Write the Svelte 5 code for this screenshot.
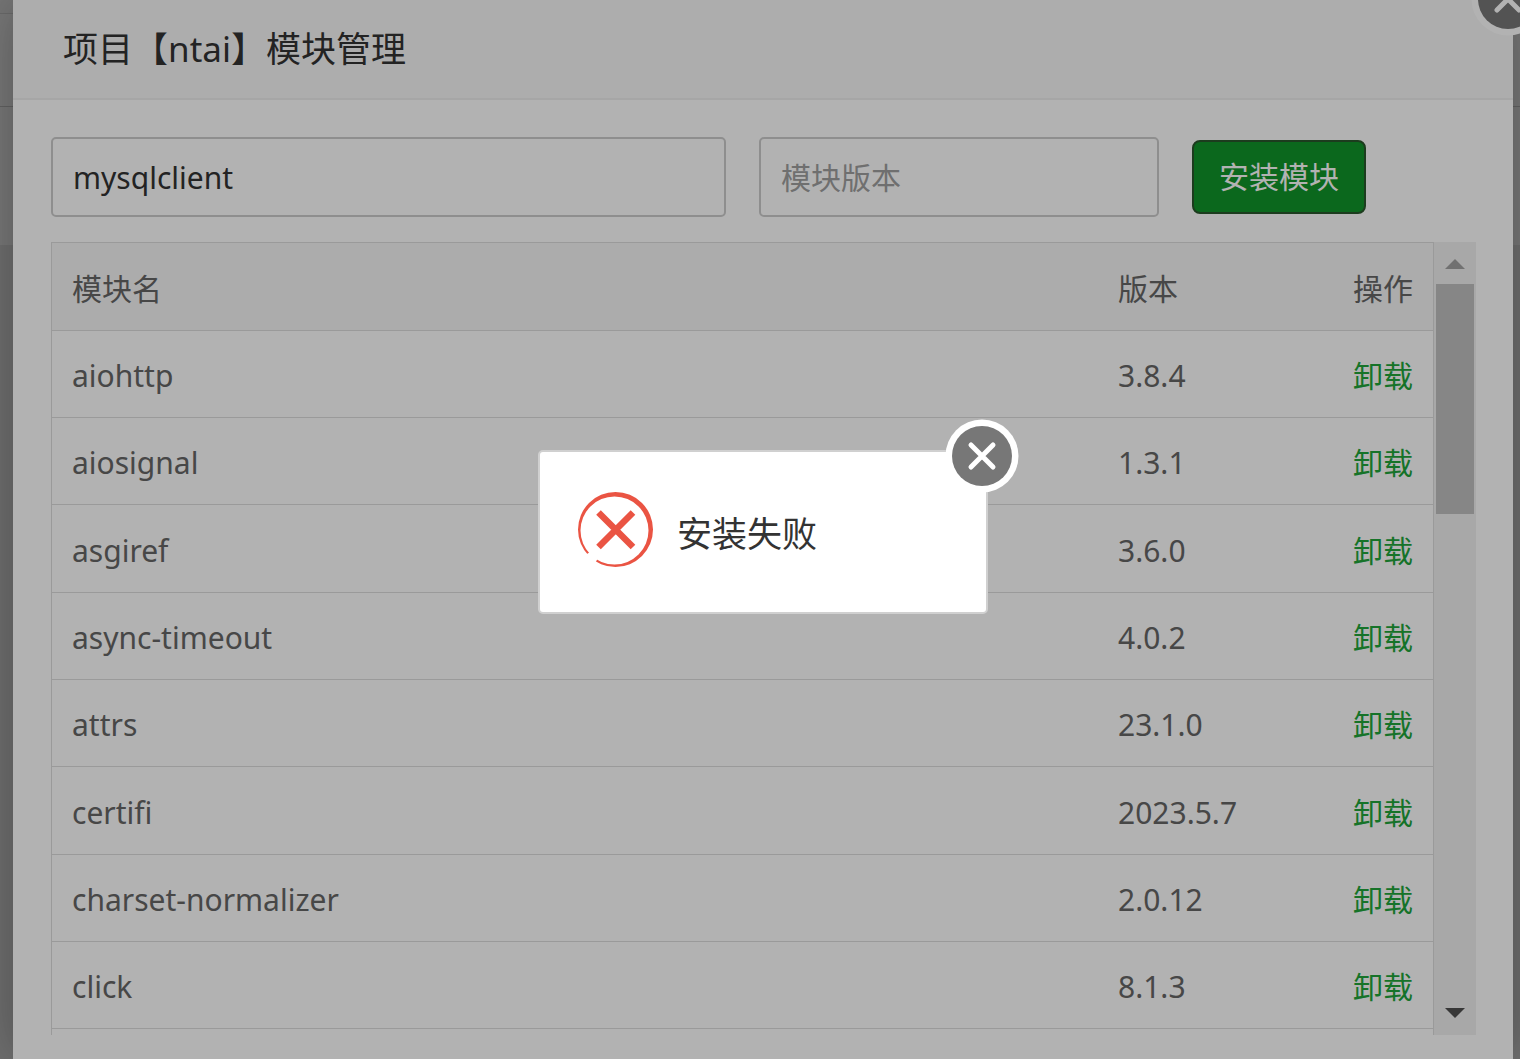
<script>
  let moduleName = 'mysqlclient';
  let moduleVersion = '';
  let visible = true;
  let alertVisible = true;

  const modules = [
    { name: 'aiohttp', version: '3.8.4' },
    { name: 'aiosignal', version: '1.3.1' },
    { name: 'asgiref', version: '3.6.0' },
    { name: 'async-timeout', version: '4.0.2' },
    { name: 'attrs', version: '23.1.0' },
    { name: 'certifi', version: '2023.5.7' },
    { name: 'charset-normalizer', version: '2.0.12' },
    { name: 'click', version: '8.1.3' }
  ];

  function handleInstall() {
    alertVisible = true;
  }
</script>

<div class="page">
  <div class="backdrop">
    <div class="strip"></div>
    <div class="bar"></div>
    <div class="panel"></div>
  </div>

  {#if visible}
    <section class="dialog">
      <header class="dialog-header">
        <h2>项目【ntai】模块管理</h2>
      </header>
      <button class="close-btn dialog-close" aria-label="关闭" on:click={() => (visible = false)}>
        <svg width="74" height="74" viewBox="0 0 74 74">
          <circle cx="37" cy="37" r="36.500" fill="#fff" />
          <circle cx="37" cy="37" r="30" fill="#777" />
          <path d="M26 26L48 48M48 26L26 48" stroke="#fff" stroke-width="5" stroke-linecap="round" />
        </svg>
      </button>

      <div class="dialog-body">
        <form class="install-form" on:submit|preventDefault={handleInstall}>
          <input class="name-input" type="text" aria-label="模块名" bind:value={moduleName} />
          <input class="version-input" type="text" placeholder="模块版本" bind:value={moduleVersion} />
          <button class="install-btn" type="submit">安装模块</button>
        </form>

        <div class="list">
          <div class="table-box">
            <table>
              <thead>
                <tr>
                  <th>模块名</th>
                  <th class="col-version">版本</th>
                  <th class="col-action">操作</th>
                </tr>
              </thead>
              <tbody>
                {#each modules as item}
                  <tr>
                    <td>{item.name}</td>
                    <td>{item.version}</td>
                    <td class="col-action"><a href="#uninstall">卸载</a></td>
                  </tr>
                {/each}
              </tbody>
            </table>
          </div>
          <div class="scrollbar" aria-hidden="true">
            <svg class="arrow up" width="20" height="10" viewBox="0 0 20 10"><path d="M0 10L10 0L20 10z" /></svg>
            <div class="thumb"></div>
            <svg class="arrow down" width="20" height="10" viewBox="0 0 20 10"><path d="M0 0L10 10L20 0z" /></svg>
          </div>
        </div>
      </div>
    </section>
  {/if}

  {#if alertVisible}
    <div class="overlay">
      <div class="alert" role="alertdialog" aria-labelledby="alert-text">
        <svg class="alert-icon" width="75" height="75" viewBox="0 0 75 75">
          <path
            fill="#ea5443"
            fill-rule="evenodd"
            d="M37.500 0A37.500 37.500 0 1 1 37.500 75A37.500 37.500 0 1 1 37.500 0zM36.500 4.500A34 34 0 1 0 36.500 72.500A34 34 0 1 0 36.500 4.500z"
          />
          <path d="M3 66L12 60L20 66L15 75H3z" fill="#fff" />
          <path d="M20.500 20.500L55 55M55 20.500L20.500 55" stroke="#ea5443" stroke-width="6.500" />
        </svg>
        <span id="alert-text">安装失败</span>
        <button class="close-btn alert-close" aria-label="关闭" on:click={() => (alertVisible = false)}>
          <svg width="74" height="74" viewBox="0 0 74 74">
            <circle cx="37" cy="37" r="36.500" fill="#fff" />
            <circle cx="37" cy="37" r="30" fill="#777" />
            <path d="M26 26L48 48M48 26L26 48" stroke="#fff" stroke-width="5" stroke-linecap="round" />
          </svg>
        </button>
      </div>
    </div>
  {/if}
</div>

<style>
  :global(body) {
    margin: 0;
    overflow: hidden;
  }

  .page {
    position: relative;
    min-height: 100vh;
    box-sizing: border-box;
    padding: 0 7px 0 13px;
    background: #a0a0a0;
    font-family: 'Noto Sans', 'Noto Sans CJK SC', sans-serif;
    font-size: 30px;
    color: #333;
    overflow: hidden;
  }

  /* what is left of the page behind the dialog */
  .backdrop {
    position: absolute;
    inset: 0;
    display: flex;
    flex-direction: column;
    background: #a0a0a0;
  }

  .strip {
    height: 13px;
    background: #aaa;
    border-bottom: 1px solid #999;
  }

  .bar {
    height: 92px;
    background: #adadad;
    border-bottom: 1px solid #8e8e8e;
  }

  .panel {
    height: 138px;
    background: #adadad;
  }

  .dialog {
    position: relative;
    min-height: 100vh;
    background: #fff;
    box-shadow: 0 0 50px rgba(0, 0, 0, 0.3);
  }

  .dialog-header {
    height: 98px;
    display: flex;
    align-items: center;
    padding: 0 50px;
    background: #f8f8f8;
    border-bottom: 2px solid #eee;
  }

  .dialog-header h2 {
    margin: 0;
    font-size: 35px;
    font-weight: 400;
    line-height: 48px;
  }

  .close-btn {
    position: absolute;
    width: 74px;
    height: 74px;
    padding: 0;
    border: none;
    background: transparent;
    cursor: pointer;
  }

  .close-btn svg {
    display: block;
  }

  .dialog-close {
    top: -38px;
    right: -32px;
  }

  .dialog-body {
    padding: 37px 37px 24px 38px;
  }

  .install-form {
    display: flex;
    align-items: center;
    gap: 33px;
    margin-bottom: 25px;
  }

  .install-form input {
    height: 80px;
    box-sizing: border-box;
    padding: 0 20px;
    border: 2px solid #ccc;
    border-radius: 5px;
    background: #fff;
    color: #333;
    font: inherit;
  }

  .install-form input:focus {
    outline: none;
    border-color: #20a53a;
  }

  .install-form input::placeholder {
    color: #9f9f9f;
    opacity: 1;
  }

  .name-input {
    width: 675px;
  }

  .version-input {
    width: 400px;
  }

  .install-btn {
    height: 74px;
    padding: 0 25px;
    border: 2px solid #29572b;
    border-radius: 8px;
    background: #10952a;
    color: #fff;
    font: inherit;
    line-height: 40px;
    cursor: pointer;
  }

  .list {
    display: flex;
  }

  .table-box {
    flex: 1;
    padding-bottom: 6px;
    border-top: 1px solid #ddd;
    border-left: 1px solid #ddd;
  }

  table {
    width: 100%;
    table-layout: fixed;
    border-collapse: separate;
    border-spacing: 0;
    color: #666;
  }

  th,
  td {
    height: 87px;
    box-sizing: border-box;
    padding: 4px 20px 0;
    border-bottom: 1px solid #ddd;
    text-align: left;
    font-weight: 400;
    line-height: 40px;
  }

  th,
  tr:nth-child(3n) td {
    height: 88px;
  }

  th {
    background: #f6f6f6;
  }

  .col-version {
    width: 233px;
  }

  .col-action {
    width: 102px;
    text-align: right;
  }

  td a {
    color: #20a53a;
    text-decoration: none;
  }

  .scrollbar {
    width: 42px;
    display: flex;
    flex-direction: column;
    align-items: center;
    border-left: 1px solid #ddd;
    background: #f1f1f1;
  }

  .thumb {
    width: 38px;
    height: 230px;
    margin-top: 15px;
    background: #c1c1c1;
  }

  .arrow {
    display: block;
  }

  .up {
    margin-top: 17px;
    fill: #a3a3a3;
  }

  .down {
    margin-top: auto;
    margin-bottom: 17px;
    fill: #505050;
  }

  .overlay {
    position: fixed;
    inset: 0;
    display: flex;
    align-items: center;
    justify-content: center;
    padding: 4px 0 0 6px;
    background: rgba(0, 0, 0, 0.3);
  }

  .alert {
    position: relative;
    width: 450px;
    height: 164px;
    box-sizing: border-box;
    display: flex;
    align-items: center;
    gap: 24px;
    padding: 0 38px 4px;
    border: 2px solid #d0d0d0;
    border-radius: 5px;
    background: #fff;
    font-size: 35px;
  }

  .alert span {
    padding-top: 8px;
    line-height: 48px;
  }

  .alert-close {
    top: -33px;
    right: -33px;
  }
</style>
